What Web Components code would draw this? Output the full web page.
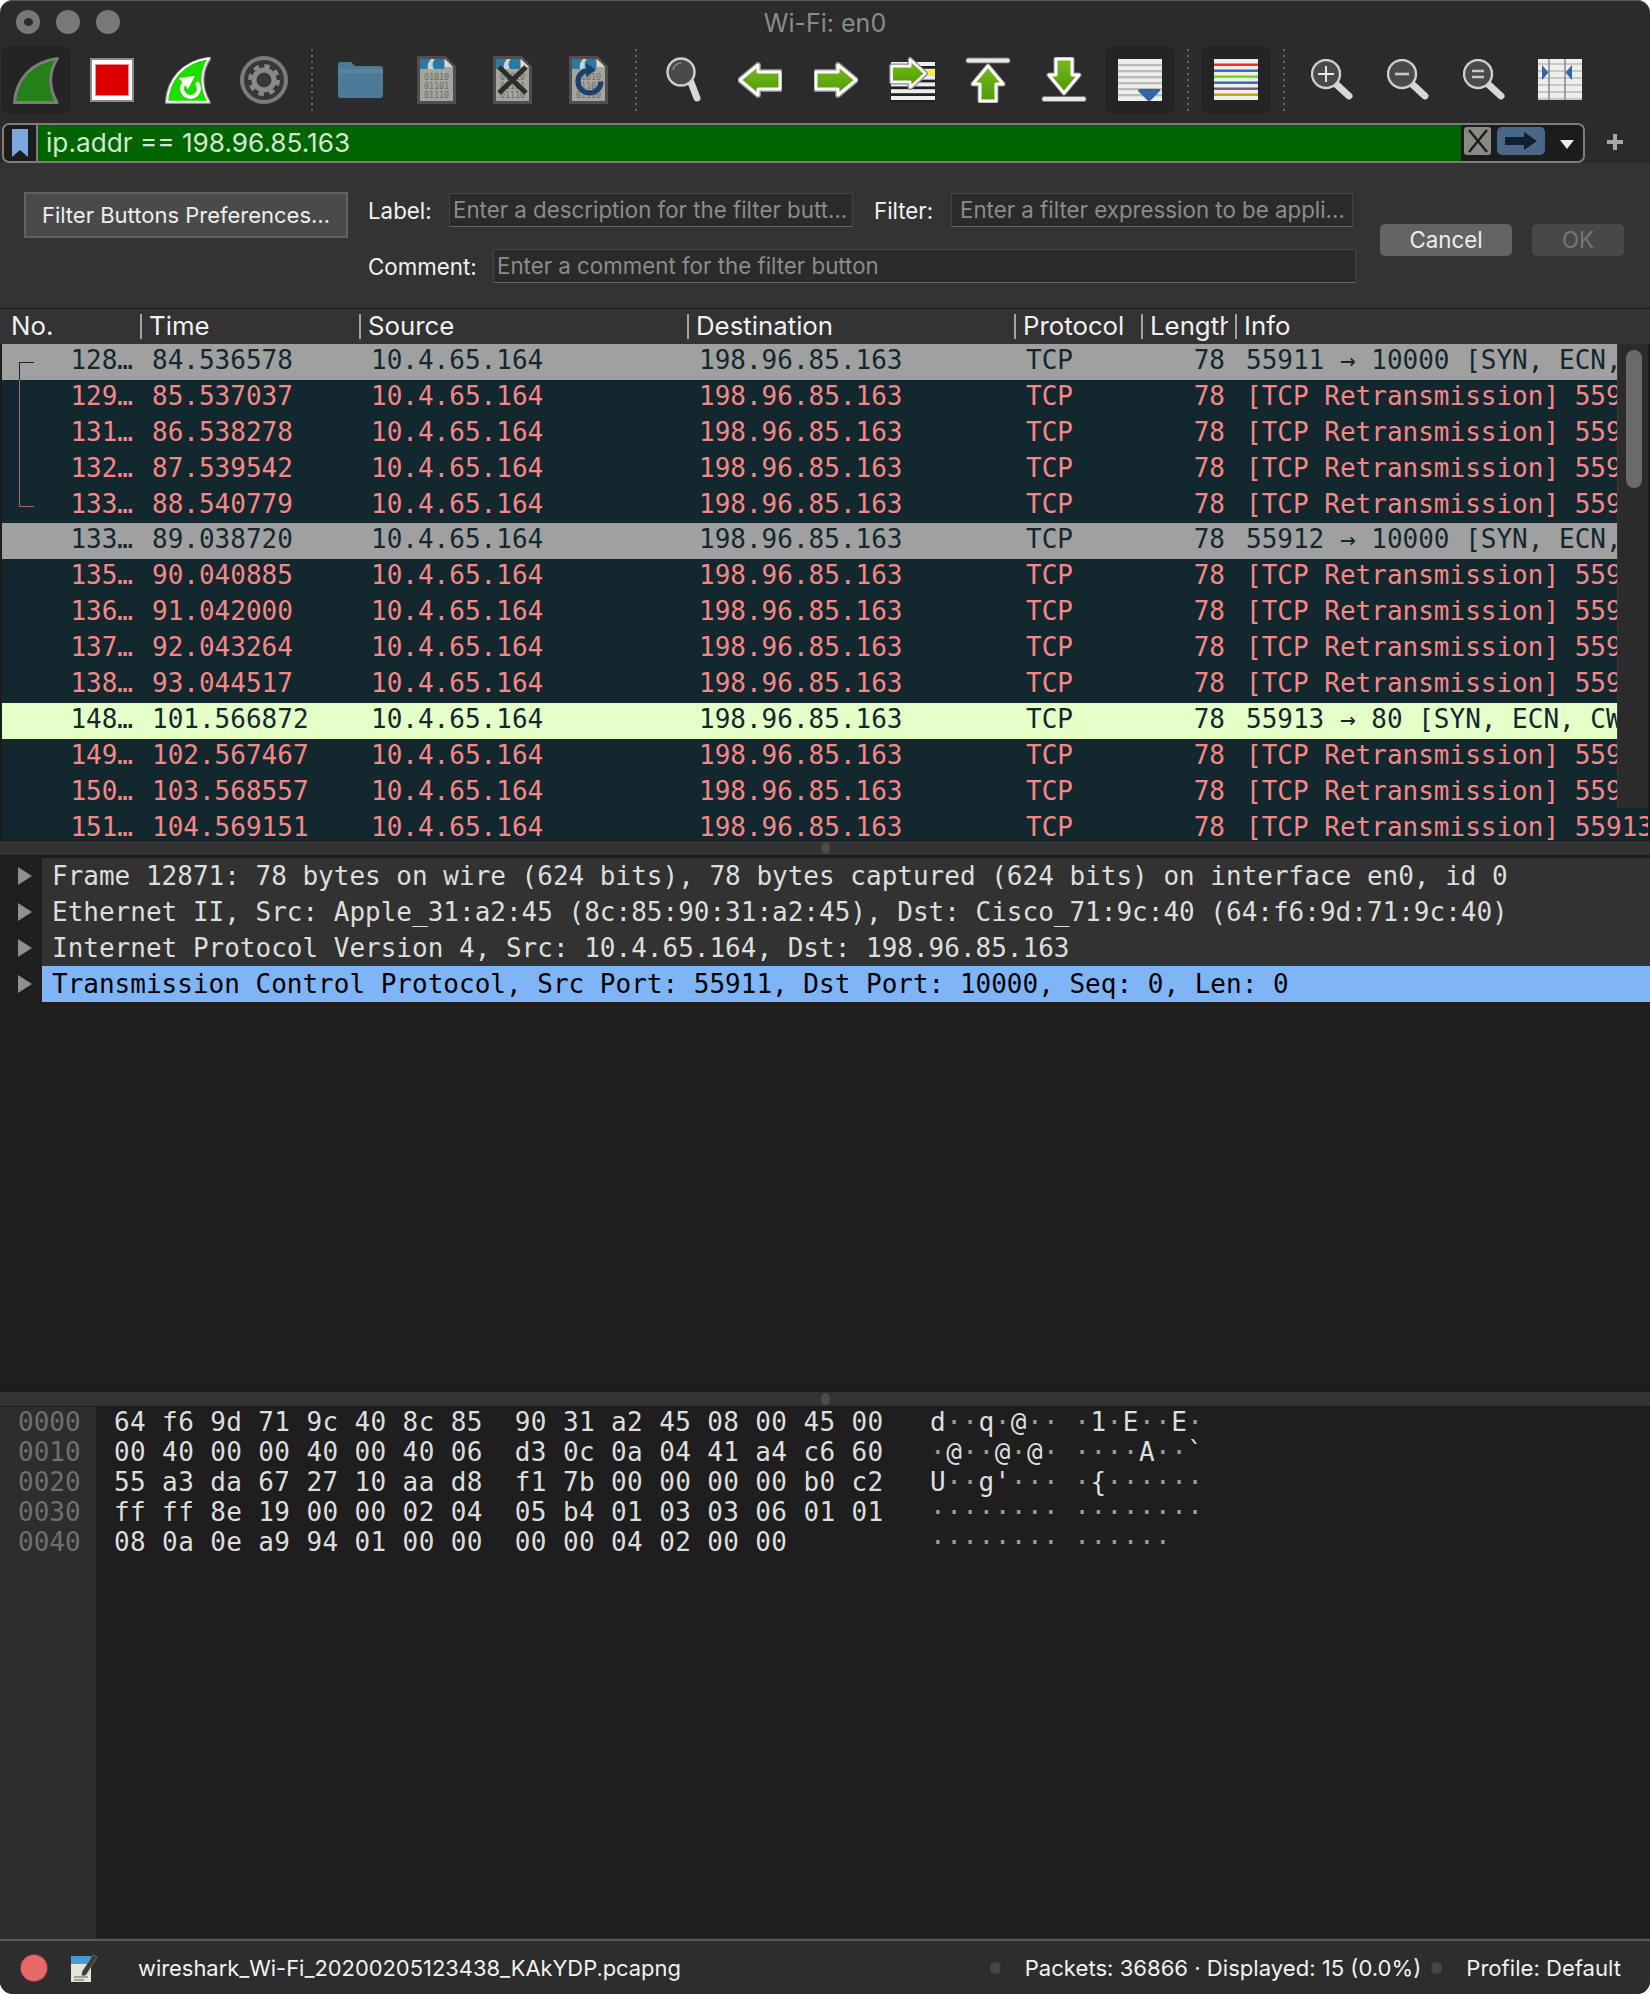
<!DOCTYPE html>
<html><head><meta charset="utf-8"><title>Wi-Fi: en0</title>
<style>
html,body{margin:0;padding:0;background:#fff}
body{font-family:Inter,"Liberation Sans",sans-serif;color:#eee}
</style></head><body>
<ws-window>
  <ws-titlebar>Wi-Fi: en0</ws-titlebar>
  <ws-toolbar></ws-toolbar>
  <ws-filterbar>ip.addr == 198.96.85.163</ws-filterbar>
  <ws-button-editor></ws-button-editor>
  <ws-packet-list></ws-packet-list>
  <ws-splitter></ws-splitter>
  <ws-tree></ws-tree>
  <ws-splitter></ws-splitter>
  <ws-hex></ws-hex>
  <ws-statusbar></ws-statusbar>
</ws-window>
<script>
const MONO='"DejaVu Sans Mono","Liberation Mono",monospace';
function make(css,html){return class extends HTMLElement{constructor(){super();const s=this.attachShadow({mode:'open'});s.innerHTML='<style>'+css+'</style>'+(typeof html==='function'?html(this):html);}}}

customElements.define('ws-window',make(`
:host{display:flex;flex-direction:column;width:1650px;height:1994px;background:#2b2b2b;border-radius:13px;overflow:hidden;box-shadow:inset 0 1px 0 #5a5a5a}
`,'<slot></slot>'));

customElements.define('ws-titlebar',make(`
:host{display:flex;align-items:center;justify-content:center;height:46px;position:relative;color:#8b8b8b;font-size:25px;flex:none;box-sizing:border-box}
.l{position:absolute;left:16px;top:10px;display:flex;gap:16px}
.l i{width:24px;height:24px;border-radius:50%;background:#787878;display:flex;align-items:center;justify-content:center}
.l i:first-child::after{content:"";width:9px;height:8px;border-radius:50%;background:#2a2a2a}
`,'<div class="l"><i></i><i></i><i></i></div><slot></slot>'));

/* ---------- toolbar icons ---------- */
const FIN='M1.5 45.5C3 24 17 5 44.5 1.5C36 14 35 30 44 45.5Z';
const arrowPath='M2 18L20 3V10H42V27H20V33Z';
function grad(id){return `<defs><linearGradient id="${id}" x1="0" y1="0" x2="0" y2="1"><stop offset="0" stop-color="#78bb1e"/><stop offset="1" stop-color="#4e9a06"/></linearGradient></defs>`}
function arrow(id,w,h,tr,extra=''){return `<svg width="${w}" height="${h}" viewBox="0 0 ${w} ${h}">${grad(id)}${extra}<g transform="${tr}" stroke-linejoin="round"><path d="${arrowPath}" fill="none" stroke="#8a8a8a" stroke-width="6"/><path d="${arrowPath}" fill="url(#${id})" stroke="#fff" stroke-width="3"/></g></svg>`}
function doc(inner){return `<svg width="39" height="48" viewBox="0 0 39 48"><path d="M1.5 1.5H28L37.5 11V46.5H1.5Z" fill="#a5a59d" stroke="#4f4f4f" stroke-width="3"/><path d="M3 3H27V13H3Z" fill="#2c78a4"/><path d="M14 3C11 6 10 10 11 13H17C15 10 15 6 18 3Z" fill="#c8d2d6"/><path d="M28 3L36 11H28Z" fill="#d9d9d2"/><g font-family='${MONO}' font-size="8.4" fill="#6e6e6a" text-anchor="middle"><text x="19.5" y="24">01010</text><text x="19.5" y="33">01101</text><text x="19.5" y="42">01110</text></g>${inner}</svg>`}
function mag(w,h,cx,cy,r,hx,hy,inner){return `<svg width="${w}" height="${h}" viewBox="0 0 ${w} ${h}"><line x1="${cx+r*.72}" y1="${cy+r*.72}" x2="${hx}" y2="${hy}" stroke="#d8d8d8" stroke-width="7" stroke-linecap="round"/><circle cx="${cx}" cy="${cy}" r="${r}" fill="#4a4a4a" stroke="#cfcfcf" stroke-width="2.4"/>${inner}</svg>`}
function stripes(w,h,col,start,pitch,th){let s='';for(let y=start;y<h;y+=pitch)s+=`<rect x="0" y="${y}" width="${w}" height="${th}" fill="${col}"/>`;return s}
function goStripes(){let s='';for(let y=6;y<46;y+=6.8)s+=`<rect x="4" y="${y}" width="44" height="4" fill="#eeeeec"/>`;return s}
const ICONS={
 capture:`<svg width="46" height="47" viewBox="0 0 46 47"><path d="${FIN}" fill="#25801a" stroke="#7c7c7c" stroke-width="3" stroke-linejoin="round"/></svg>`,
 stop:`<svg width="44" height="44" viewBox="0 0 44 44"><rect width="44" height="44" fill="#8a8a8a"/><rect x="2" y="2" width="40" height="40" fill="#fff"/><rect x="5" y="6" width="34" height="32" fill="#f08a8a"/><rect x="6" y="7" width="32" height="30" fill="#de0000"/></svg>`,
 restart:`<svg width="46" height="47" viewBox="0 0 46 47"><g stroke-linejoin="round"><path d="${FIN}" fill="none" stroke="#8a8a8a" stroke-width="3.6"/><path d="${FIN}" fill="#20dd00" stroke="#fff" stroke-width="2" transform="translate(.6 -.3) scale(.975 .99)"/></g><path d="M19 26A8.5 8.5 0 1 0 31.5 25.5" fill="none" stroke="#fff" stroke-width="4"/><path d="M14 21L30 19L23 32Z" fill="#fff"/></svg>`,
 gear:`<svg width="48" height="48" viewBox="0 0 48 48"><circle cx="24" cy="24" r="22" fill="#373737" stroke="#7b7b7b" stroke-width="4"/><circle cx="24" cy="24" r="10" fill="none" stroke="#8a8a8a" stroke-width="5"/><circle cx="24" cy="24" r="14" fill="none" stroke="#8a8a8a" stroke-width="4" stroke-dasharray="5.5 5.5"/></svg>`,
 folder:`<svg width="45" height="36" viewBox="0 0 45 36"><path d="M0 3a3 3 0 0 1 3-3H13L17 4H42a3 3 0 0 1 3 3V33a3 3 0 0 1-3 3H3a3 3 0 0 1-3-3Z" fill="#4a7c98"/><path d="M0 7H45V11H0Z" fill="#55859f"/></svg>`,
 doc:doc(''),
 docx:doc('<path d="M6 11L33 37M33 11L6 37" stroke="#2d2d2d" stroke-width="5" fill="none"/>'),
 docr:doc('<path d="M17 14.5A11.5 11.5 0 1 0 32 25.5" fill="none" stroke="#1d3f6d" stroke-width="5.2"/><path d="M17 7L27 14L17 21Z" fill="#1d3f6d"/>'),
 find:mag(36,46,15,15,13.5,31,41,'<path d="M7 13A9 9 0 0 1 15 6" fill="none" stroke="#8a8a8a" stroke-width="1.5"/>'),
 back:arrow('ga1',44,36,'translate(0 0)'),
 fwd:arrow('ga2',44,36,'translate(44 0) scale(-1 1)'),
 go:`<svg width="50" height="48" viewBox="0 0 50 48">${grad('ga3')}<rect x="4" y="6" width="44" height="40" fill="#222"/>${goStripes()}<rect x="30" y="14" width="18" height="6" fill="#fce94f"/><g transform="translate(40 1) scale(-.84 .92)" stroke-linejoin="round"><path d="${arrowPath}" fill="none" stroke="#8a8a8a" stroke-width="6"/><path d="${arrowPath}" fill="url(#ga3)" stroke="#fff" stroke-width="3"/></g></svg>`,
 top:`<svg width="46" height="46" viewBox="0 0 46 46">${grad('ga4')}<rect x="1" y="1" width="44" height="5" rx="2" fill="#e8e8e8" stroke="#777" stroke-width="1"/><g stroke-linejoin="round"><path d="M23 9L38 27H31V44H15V27H8Z" fill="none" stroke="#8a8a8a" stroke-width="5"/><path d="M23 9L38 27H31V44H15V27H8Z" fill="url(#ga4)" stroke="#fff" stroke-width="3"/></g></svg>`,
 bottom:`<svg width="46" height="46" viewBox="0 0 46 46">${grad('ga5')}<rect x="1" y="39.5" width="44" height="5" rx="2" fill="#e8e8e8" stroke="#777" stroke-width="1"/><g stroke-linejoin="round"><path d="M23 36L8 18H15V2H31V18H38Z" fill="none" stroke="#8a8a8a" stroke-width="5"/><path d="M23 36L8 18H15V2H31V18H38Z" fill="url(#ga5)" stroke="#fff" stroke-width="3"/></g></svg>`,
 auto:`<svg width="44" height="42" viewBox="0 0 44 42"><rect width="44" height="42" fill="#eeeeec"/>${stripes(44,40,'#babdb6',5,6,2.3)}<path d="M20 31.5Q20 30 22 30H41Q43 30 42 32L33 41Q31 43 29 41L21 33Q20 32 20 31.5Z" fill="#3465a4"/></svg>`,
 color:`<svg width="44" height="42" viewBox="0 0 44 42"><rect width="44" height="41" fill="#eeeeec"/>${['#ef2929','#3465a4','#73d216','#3465a4','#75507b','#c4a000'].map((c,i)=>`<rect y="${4.5+i*6}" width="44" height="2.4" fill="${c}"/>`).join('')}</svg>`,
 zin:mag(42,42,15,15,14,38,37,'<path d="M15 7V23M7 15H23" stroke="#e8e8e8" stroke-width="2"/>'),
 zout:mag(42,42,15,15,14,38,37,'<path d="M8 15H22" stroke="#c8c8c8" stroke-width="2.6"/>'),
 zeq:mag(42,42,15,15,14,38,37,'<path d="M9 12H21M9 18H21" stroke="#c8c8c8" stroke-width="2.4"/>'),
 resize:`<svg width="44" height="42" viewBox="0 0 44 42"><rect width="44" height="41" fill="#eeeeec"/>${stripes(44,40,'#c6c8c2',4,7,2)}<path d="M11 0V41M27 0V41" stroke="#8d8d8d" stroke-width="1.6"/><path d="M4 6V21L10.5 13.5Z" fill="#3465a4"/><path d="M34 6V21L27.5 13.5Z" fill="#3465a4"/></svg>`
};
const TOOLS=['capture:h','stop','restart','gear','|','folder','doc','docx','docr','|','find','back','fwd','go','top','bottom','auto:a','|','color:a','|','zin','zout','zeq','resize'];
customElements.define('ws-toolbar',make(`
:host{display:flex;align-items:center;gap:8px;height:68px;padding-left:2px;flex:none}
.t{width:68px;height:68px;display:flex;align-items:center;justify-content:center;border-radius:8px}
.t.h,.t.a{background:#242424}
.s{width:2px;height:62px;margin:0 5px;background:repeating-linear-gradient(#6a6a6a 0 2px,transparent 2px 6px)}
`,()=>TOOLS.map(t=>{if(t==='|')return '<div class="s"></div>';const[n,m]=t.split(':');return `<div class="t ${m||''}">${ICONS[n]}</div>`}).join('')));

customElements.define('ws-filterbar',make(`
:host{display:flex;align-items:stretch;height:40px;box-sizing:border-box;margin:9px 0 0 2px;flex:none;width:1583px;border:2px solid #7d7d7d;border-radius:7px;background:#1c1c1c;overflow:hidden}
.b{display:flex;align-items:center;justify-content:center;border-right:2px solid #7d7d7d;box-sizing:border-box;width:34px}
.g{width:1423px;background:#006400;color:#d3e8d0;font-size:26.2px;line-height:36px;padding-left:8px;box-sizing:border-box}
.x{width:27px;height:28px;margin:2px 0 0 3px;background:#8a8a85;border-radius:3px;display:flex;align-items:center;justify-content:center}
.ap{width:48px;height:28px;margin:2px 0 0 6px;background:#4a6788;border-radius:5px;display:flex;align-items:center;justify-content:center}
.d{margin:3px 0 0 15px;width:0;height:0;border-left:7px solid transparent;border-right:7px solid transparent;border-top:9px solid #eee;align-self:center}
`,`<div class="b"><svg width="16" height="28" viewBox="0 0 16 28"><path d="M0 0H16V28L8 21L0 28Z" fill="#7ba7dc"/></svg></div><div class="g"><slot></slot></div><div class="x"><svg width="22" height="24" viewBox="0 0 22 24"><path d="M2 1L20 23M20 1L2 23" stroke="#1c1c1c" stroke-width="2.4"/></svg></div><div class="ap"><svg width="34" height="18" viewBox="0 0 34 18"><path d="M1 5H20V0L33 9L20 18V13H1Z" fill="#0f1e30"/></svg></div><div class="d"></div>`));

customElements.define('ws-plus',make(`:host{display:block;position:absolute;left:1607px;top:134px;width:16px;height:16px;background:linear-gradient(#a8a8a8,#a8a8a8) center/16px 4px no-repeat,linear-gradient(#a8a8a8,#a8a8a8) center/4px 16px no-repeat}`,''));

customElements.define('ws-button-editor',make(`
:host{display:flex;flex:none;height:145px;background:#333;box-sizing:border-box;padding:29px 0 0 24px;font-size:22.3px;color:#f2f2f2;align-items:flex-start}
.pref{width:324px;height:46px;box-sizing:border-box;background:#4a4a4a;border:2px solid #626262;display:flex;align-items:center;justify-content:center;color:#eee;font-size:22px}
.c{margin-left:20px;display:flex;flex-direction:column;gap:22px;padding-top:1px}
.r{display:flex;align-items:center}
.i{height:34px;box-sizing:border-box;background:#2a2a2a;border:1px solid #454545;border-bottom-color:#666;color:#8c8c8c;padding-left:3px;line-height:32px;white-space:nowrap;overflow:hidden}
.bt{display:flex;gap:20px;margin:32px 0 0 24px}
.k{height:32px;border-radius:5px;background:#636363;display:flex;align-items:center;justify-content:center;color:#eee;width:132px;padding-bottom:2px;box-sizing:border-box}
.k.o{width:92px;background:#484848;color:#777}
`,`<div class="pref">Filter Buttons Preferences…</div>
<div class="c"><div class="r"><span style="width:81px">Label:</span><div class="i" style="width:404px">Enter a description for the filter butt…</div><span style="margin-left:21px;width:77px">Filter:</span><div class="i" style="width:402px;padding-left:8px">Enter a filter expression to be appli…</div></div>
<div class="r"><span style="width:125px">Comment:</span><div class="i" style="width:863px">Enter a comment for the filter button</div></div></div>
<div class="bt"><div class="k">Cancel</div><div class="k o">OK</div></div>`));

/* ---------- packet list ---------- */
const COLS='138px 219px 328px 327px 127px 94px 1fr';
customElements.define('ws-packet-row',make(`
:host{display:block;height:35.9px;position:relative}
.g{display:grid;grid-template-columns:${COLS};height:100%;font:26px/33px ${MONO};white-space:nowrap;background:var(--bg);color:var(--fg)}
.g>div{overflow:hidden}
.n{text-align:right;padding-right:7px}
.p{padding-left:12px}
.l{text-align:right;padding-right:10px}
.i{padding-left:11px}
i{position:absolute;display:block;border:0 solid var(--cn);pointer-events:none}
`,h=>{const a=n=>h.getAttribute(n)||'';const c=a('conv');let bits='';
 if(c==='first')bits='<i style="left:17px;top:18px;width:14px;height:18px;border-width:1.5px 0 0 1.5px"></i>';
 if(c==='mid')bits='<i style="left:17px;top:0;width:0;height:36px;border-left-width:1.5px"></i>';
 if(c==='last')bits='<i style="left:17px;top:0;width:14px;height:18px;border-width:0 0 1.5px 1.5px"></i>';
 return `<div class="g"><div class="n">${a('no')}</div><div class="p">${a('t')}</div><div class="p">10.4.65.164</div><div class="p">198.96.85.163</div><div class="p">TCP</div><div class="l">78</div><div class="i">${a('info')}</div></div>${bits}`}));

const PK=[['128','84.536578','55911 → 10000 [SYN, ECN,','g','first'],['129','85.537037','[TCP Retransmission] 55911','r','mid'],['131','86.538278','[TCP Retransmission] 55911','r','mid'],['132','87.539542','[TCP Retransmission] 55911','r','mid'],['133','88.540779','[TCP Retransmission] 55911','r','last'],['133','89.038720','55912 → 10000 [SYN, ECN,','g'],['135','90.040885','[TCP Retransmission] 55912','r'],['136','91.042000','[TCP Retransmission] 55912','r'],['137','92.043264','[TCP Retransmission] 55912','r'],['138','93.044517','[TCP Retransmission] 55912','r'],['148','101.566872','55913 → 80 [SYN, ECN, CWR','y'],['149','102.567467','[TCP Retransmission] 55913','r'],['150','103.568557','[TCP Retransmission] 55913','r'],['151','104.569151','[TCP Retransmission] 55913','r']];
const THEME={g:'--bg:#a0a0a0;--fg:#12272e;--cn:#12272e',r:'--bg:#12272e;--fg:#f78787;--cn:#a86468',y:'--bg:#e4ffc7;--fg:#12272e;--cn:#12272e'};
customElements.define('ws-packet-list',make(`
:host{display:block;flex:none;height:532px;position:relative;background:#1c1c1c;border-top:1px solid #151515;box-sizing:border-box;overflow:hidden;padding:0 2px}
.h{display:grid;grid-template-columns:${COLS};height:35px;margin:0 -2px;padding:0 0 0 2px;background:#333;font-size:25.8px;color:#f0f0f0;line-height:33px;white-space:nowrap}
.h>div{overflow:hidden;position:relative;padding-left:9px}
.h>div+div::before{content:"";position:absolute;left:0;top:5px;height:25px;width:1.5px;background:#a5a5a5}
.cut{position:relative}
.cut span{display:block;overflow:hidden;width:78px}
.sb{position:absolute;left:1617px;top:35px;width:31px;height:464px;background:#2b2b2b;border-left:1px solid #3a3a3a;box-sizing:border-box}
.th{position:absolute;left:8px;top:6px;width:16px;height:138px;border-radius:8px;background:#6a6a6a}
`,`<div class="h"><div>No.</div><div>Time</div><div>Source</div><div>Destination</div><div>Protocol</div><div class="cut"><span>Length</span></div><div>Info</div></div>`+PK.map(p=>`<ws-packet-row no="${p[0]}…" t="${p[1]}" info="${p[2]}" conv="${p[4]||''}" style="${THEME[p[3]]}"></ws-packet-row>`).join('')+`<div class="sb"><div class="th"></div></div>`));

customElements.define('ws-splitter',make(`
:host{display:flex;flex:none;height:16px;background:#333;border-top:1px solid #1a1a1a;border-bottom:1px solid #1a1a1a;box-sizing:border-box;align-items:center;justify-content:center}
i{width:9px;height:12px;border-radius:50%;background:#4c4c4c}
`,'<i></i>'));

/* ---------- tree ---------- */
const TREE=['Frame 12871: 78 bytes on wire (624 bits), 78 bytes captured (624 bits) on interface en0, id 0','Ethernet II, Src: Apple_31:a2:45 (8c:85:90:31:a2:45), Dst: Cisco_71:9c:40 (64:f6:9d:71:9c:40)','Internet Protocol Version 4, Src: 10.4.65.164, Dst: 198.96.85.163','Transmission Control Protocol, Src Port: 55911, Dst Port: 10000, Seq: 0, Len: 0'];
customElements.define('ws-tree-row',make(`
:host{display:flex;height:36px;font:26px/36px ${MONO};white-space:nowrap}
.a{width:42px;background:#1e1e1e;display:flex;align-items:center;padding-left:18px;box-sizing:border-box;flex:none}
.a::before{content:"";border-left:14px solid #8f8f8f;border-top:9px solid transparent;border-bottom:9px solid transparent}
.t{flex:1;padding-left:10px;background:#323232;color:#dedede}
:host([sel]) .t{background:#7fb5f7;color:#000}
`,'<div class="a"></div><div class="t"><slot></slot></div>'));
customElements.define('ws-tree',make(`
:host{display:block;flex:none;height:535px;background:#1e1e1e;padding-top:2px;box-sizing:border-box}
`,TREE.map((t,i)=>`<ws-tree-row ${i==3?'sel':''}>${t}</ws-tree-row>`).join('')));

/* ---------- hex ---------- */
const HX=[['0000','64 f6 9d 71 9c 40 8c 85  90 31 a2 45 08 00 45 00','d··q·@··','·1·E··E·'],['0010','00 40 00 00 40 00 40 06  d3 0c 0a 04 41 a4 c6 60','·@··@·@·','····A··`'],['0020','55 a3 da 67 27 10 aa d8  f1 7b 00 00 00 00 b0 c2',"U··g'···",'·{······'],['0030','ff ff 8e 19 00 00 02 04  05 b4 01 03 03 06 01 01','········','········'],['0040','08 0a 0e a9 94 01 00 00  00 00 04 02 00 00','········','······']];
const dots=s=>[...s].map(c=>c==='·'?'<b>·</b>':c).join('');
customElements.define('ws-hex',make(`
:host{display:block;flex:none;height:531px;background:#1e1e1e;box-sizing:border-box;font:26px/30px ${MONO};white-space:pre}
.w{display:grid;grid-template-columns:96px 1fr;height:100%}
.o{background:#2d2d2d;color:#707070;padding:0 0 0 18px}
.m{padding:0 0 0 18px;color:#dedede}
.x{display:flex}
.hx{width:816px;letter-spacing:.38px}
.as{letter-spacing:.5px}
.as+.as{margin-left:15px}
b{font-weight:400;color:#9c9c9c}
`,`<div class="w"><div class="o">${HX.map(r=>r[0]).join('\n')}</div><div class="m">${HX.map(r=>`<div class="x"><span class="hx">${r[1]}</span><span class="as">${dots(r[2])}</span><span class="as">${dots(r[3])}</span></div>`).join('')}</div></div>`));

customElements.define('ws-statusbar',make(`
:host{display:flex;align-items:center;flex:1;background:#2d2d2d;border-top:2px solid #595959;padding:0 29px 0 21px;font-size:22.1px;color:#f2f2f2;white-space:nowrap;margin-top:1px}
.led{width:26px;height:26px;border-radius:50%;background:#e76a6a;box-shadow:0 0 0 1px #7c3434;flex:none}
svg{margin-left:23px;flex:none}
.f{margin-left:40px;font-size:21.9px}
.s{margin-left:auto;width:11px;height:12px;border-radius:50%;background:#454545;flex:none}
.p{margin-left:24px}
.s2{margin-left:10px;width:11px;height:12px;border-radius:50%;background:#454545;flex:none}
.q{margin-left:24px}
`,`<div class="led"></div><svg width="28" height="28" viewBox="0 0 28 28"><path d="M1 2H21V28H1Z" fill="#e6e6d6"/><path d="M1 2H21V10H1Z" fill="#4a9bd0"/><path d="M23 1L27 3L16 21L12 22L12 18Z" fill="#3a3a3a" stroke="#888" stroke-width=".6"/><path d="M4 23H18M4 26H14" stroke="#8b8b8b" stroke-width="1.4"/></svg><span class="f">wireshark_Wi-Fi_20200205123438_KAkYDP.pcapng</span><i class="s"></i><span class="p">Packets: 36866 · Displayed: 15 (0.0%)</span><i class="s2"></i><span class="q">Profile: Default</span>`));
</script>
<ws-plus></ws-plus>
</body></html>
